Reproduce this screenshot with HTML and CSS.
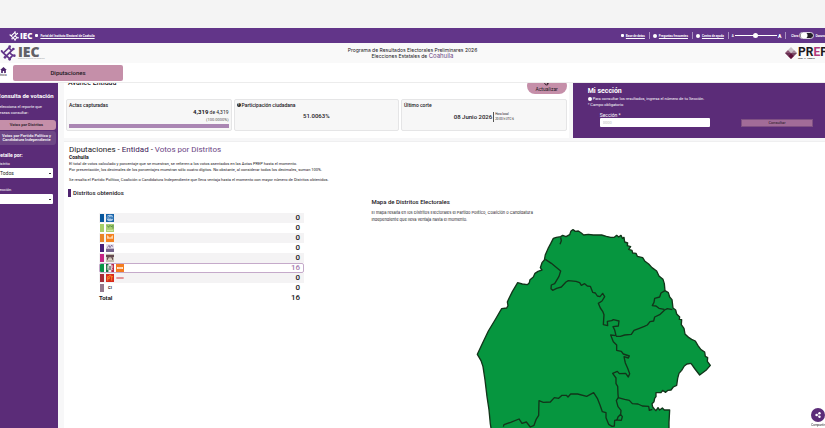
FILE: index.html
```html
<!DOCTYPE html>
<html lang="es">
<head>
<meta charset="utf-8">
<title>PREP Coahuila 2026</title>
<link rel="stylesheet" href="styles.css">
</head>
<body>
<svg class="defs" aria-hidden="true">
  <symbol id="mark" viewBox="0 0 48 48">
    <g fill="none" stroke="currentColor" stroke-width="5">
      <path d="M5 19 L16 30 M10 24 L27 8 M25 7 L36 18 M38 14 L17 35 M13 27 L29 41 M29 41 L40 29 M27 21 L37 31"/>
    </g>
    <g fill="currentColor">
      <circle cx="5" cy="18" r="3"/><circle cx="29" cy="5" r="4"/><circle cx="40" cy="12" r="4"/>
      <circle cx="15" cy="37" r="4"/><circle cx="29" cy="43" r="4"/><circle cx="43" cy="32" r="4"/>
    </g>
  </symbol>
</svg>

<div class="topbar">
  <a class="brand small" href="#"><svg class="mark"><use href="#mark"/></svg><span>IEC</span></a>
  <a class="toplink portal" href="#"><i class="dot square"></i><u>Portal del Instituto Electoral de Coahuila</u></a>
  <nav class="tools">
    <a class="toplink" href="#"><i class="dot square"></i><u>Base de datos</u></a>
    <a class="toplink" href="#"><i class="dot"></i><u>Preguntas frecuentes</u></a>
    <a class="toplink" href="#"><i class="dot"></i><u>Centro de ayuda</u></a>
    <label class="sizer"><span>A</span><input type="range" min="0" max="100" value="48" aria-label="Tamaño de texto"><b>A</b></label>
    <label class="theme"><span>Claro</span><input type="checkbox"><span>Oscuro</span></label>
  </nav>
</div>

<header class="header">
  <a class="brand" href="#"><svg class="mark"><use href="#mark"/></svg><span>IEC<small>Instituto Electoral de Coahuila</small></span></a>
  <h1>Programa de Resultados Electorales Preliminares 2026<span>Elecciones Estatales de <em>Coahuila</em></span></h1>
  <a class="prep" href="#">
    <svg viewBox="0 0 36 36"><path fill="#c9c3c8" d="M18 0 27 9 18 18 9 9z"/><path fill="#8a5573" d="M9 9 18 18 9 27 0 18z"/><path fill="#a88a9c" d="M27 9 36 18 27 27 18 18z"/><path fill="#751540" d="M18 18 27 27 18 36 9 27z"/><path fill="#4c1136" d="M0 18h36L18 36z" opacity=".55"/></svg>
    <span>PR<em>E</em>P<small>2026 · A · TIEMPO</small></span>
  </a>
</header>

<nav class="tabs">
  <a class="home" href="#"><svg viewBox="0 0 20 18"><path fill="#4c246b" d="M10 0 0 9h3v9h5v-6h4v6h5V9h3z"/></svg>Inicio</a>
  <button class="tab">Diputaciones</button>
</nav>

<div class="body">
  <aside class="side">
    <h2>Consulta de votación</h2>
    <p>Selecciona el reporte que deseas consultar:</p>
    <button class="report active">Votos por Distritos</button>
    <button class="report">Votos por Partido Político y Candidatura Independiente</button>
    <h3>Detalle por:</h3>
    <label for="distrito">Distrito</label>
    <select id="distrito"><option>Todos</option></select>
    <label for="seccion">Sección</label>
    <select id="seccion"><option></option></select>
  </aside>

  <main class="main">
    <div class="summary">
      <section class="advance">
        <div class="advance-head">
          <h2>Avance Entidad</h2>
          <button class="refresh"><svg viewBox="0 0 12 12"><path d="M10 3v3H7M10 6a4 4 0 1 1-1-3" fill="none" stroke="#21151d" stroke-width="2"/></svg>Actualizar</button>
        </div>
        <div class="cards">
          <div class="card">
            <h3>Actas capturadas</h3>
            <p class="count"><b>4,319</b> de 4,319</p>
            <p class="percent">(100.0000%)</p>
            <div class="bar"></div>
          </div>
          <div class="card">
            <h3><i class="help">?</i>Participación ciudadana</h3>
            <p class="figure">51.0063%</p>
          </div>
          <div class="card">
            <h3>Último corte</h3>
            <p class="figure date">08 Junio 2026<small>Hora local<br>20:00 h UTC-6</small></p>
          </div>
        </div>
      </section>
      <form class="section-form">
        <h2>Mi sección</h2>
        <p><i class="dot"></i>Para consultar los resultados, ingresa el número de tu Sección.</p>
        <p>* Campo obligatorio</p>
        <div class="fields">
          <div class="field"><label for="num">Sección *</label><input id="num" type="text" placeholder="0000"></div>
          <button type="button">Consultar</button>
        </div>
      </form>
    </div>

    <section class="results">
      <h2 class="crumbs">Diputaciones - <span>Entidad</span> - <em>Votos por Distritos</em></h2>
      <h3 class="state">Coahuila</h3>
      <p>El total de votos calculado y porcentaje que se muestran, se refieren a los votos asentados en las Actas PREP hasta el momento.</p>
      <p>Por presentación, los decimales de los porcentajes muestran sólo cuatro dígitos. No obstante, al considerar todos los decimales, suman 100%.</p>
      <p class="note">Se resalta el Partido Político, Coalición o Candidatura Independiente que lleva ventaja hasta el momento con mayor número de Distritos obtenidos.</p>
      <div class="columns">
        <div>
          <h3 class="won">Distritos obtenidos</h3>
          <table class="parties">
            <tbody>
              <tr><th scope="row"><span class="party"><i class="swatch blue"></i><svg viewBox="0 0 24 24"><path fill="#1763a9" d="M0 0h24v24H0z"/><circle cx="12" cy="12" r="10" fill="#a9c9e8"/><path d="M4 15V8h5q3 3 0 4H6M11 15l2-7 3 7M17 15V8l4 7V8" fill="none" stroke="#1763a9" stroke-width="2"/></svg></span></th><td>0</td></tr>
              <tr><th scope="row"><span class="party"><i class="swatch lime"></i><svg viewBox="0 0 24 24"><path fill="#a9cf72" d="M0 0h24v24H0z"/><path d="M3 4l5 6 3-6M14 4l2 5 5-5v10" fill="none" stroke="#38733a" stroke-width="2"/><path d="M3 19h18" stroke="#d5e8b5" stroke-width="3"/></svg></span></th><td>0</td></tr>
              <tr><th scope="row"><span class="party"><i class="swatch orange"></i><svg viewBox="0 0 24 24"><path fill="#f58220" d="M0 0h24v24H0z"/><path fill="#fbd3a8" d="M3 3l9 8 9-8v11H3z"/></svg></span></th><td>0</td></tr>
              <tr><th scope="row"><span class="party"><i class="swatch violet"></i><svg viewBox="0 0 24 24"><path fill="#e6e0ed" d="M0 0h24v24H0z"/><path d="M4 11l5-7 3 7 5-8 3 5" fill="none" stroke="#5a4376" stroke-width="2"/><path fill="#75638b" d="M0 14h24v10H0z"/></svg></span></th><td>0</td></tr>
              <tr><th scope="row"><span class="party"><i class="swatch magenta"></i><svg viewBox="0 0 24 24"><path fill="#c3bcae" d="M0 0h24v24H0z"/><path fill="#654a50" d="M0 3h24v6H0zM3 10h7v7H3zM14 10h7v7h-7z"/><path fill="#ded5c8" d="M6 13h12v5H6z"/></svg></span></th><td>0</td></tr>
              <tr class="leader"><th scope="row"><span class="party"><i class="swatch green"></i><svg viewBox="0 0 24 24"><path fill="#17713f" d="M0 0h8v24H0z"/><path fill="#eee" d="M8 0h8v24H8z"/><path fill="#bd2847" d="M16 0h8v24h-8z"/><path d="M4 18V5h4v6H5M12 18V7M16 18V5h4v6l-4 1 4 6" fill="none" stroke="#e9e4e4" stroke-width="2"/><path d="M12 6v12" stroke="#30343b" stroke-width="3"/></svg><svg viewBox="0 0 24 24"><path fill="#f47c20" d="M0 0h24v24H0z"/><path fill="#ffe8d0" d="M3 9h18v6H3z"/><path stroke="#e08a4c" d="M9 9v6M15 9v6"/></svg></span></th><td>16</td></tr>
              <tr><th scope="row"><span class="party"><i class="swatch red"></i><svg viewBox="0 0 24 24"><path fill="#d92a1c" d="M0 0h24v24H0z"/><path d="M5 20V8h5v6H6M13 8h8M17 8v12M9 4h7" fill="none" stroke="#ffb52e" stroke-width="2"/></svg><svg viewBox="0 0 24 24"><path fill="#d9666c" d="M1 10h22v4H1z"/></svg></span></th><td>0</td></tr>
              <tr><th scope="row"><span class="party"><i class="swatch mauve"></i><span class="ci">CI</span></span></th><td>0</td></tr>
            </tbody>
            <tfoot><tr><th scope="row">Total</th><td>16</td></tr></tfoot>
          </table>
        </div>
        <div class="map">
          <h3>Mapa de Distritos Electorales</h3>
          <p>El mapa resalta en los Distritos Electorales el Partido Político, Coalición o Candidatura Independiente que lleva ventaja hasta el momento.</p>
          <svg viewBox="0 24 750 616" role="img" aria-label="Mapa de Coahuila">
            <g stroke="#12351a" stroke-width="4" stroke-linejoin="round">
              <path fill="#06963f" d="M84 660 76 612 72 570 66 530 60 480 54 440 48 422 37 403 50 375 70 333 90 300 110 266 125 264 129 257 127 246 131 237 142 215 158 188 172 192 187 194 193 188 195 179 205 171 210 160 219 154 231 150 226 143 231 128 238 120 241 104 249 86 257 71 265 55 274 52 287 50 293 46 303 50 314 44 318 33 324 29 331 34 340 33 349 39 356 45 370 43 385 45 398 45 410 45 424 49 437 52 448 52 455 46 461 51 468 46 472 55 477 52 479 66 488 69 487 77 497 80 491 88 501 91 503 99 513 100 517 109 533 113 540 124 551 132 561 143 575 153 582 168 594 178 598 191 600 212 610 218 614 231 621 239 624 264 632 270 635 282 644 291 643 298 650 299 649 314 657 325 660 342 672 353 680 358 691 363 699 377 708 389 719 396 721 409 728 413 727 424 736 436 725 449 704 465 697 456 690 447 678 430 666 432 658 438 650 451 642 460 638 475 635 496 625 501 618 510 609 511 602 517 593 511 588 518 573 518 573 530 569 535 567 545 561 551 563 561 568 567 573 572 579 563 584 570 592 564 598 570 614 570 612 607 612 660z"/>
              <g fill="none">
                <path d="M241 118 259 130 287 153 282 169 269 191 259 195 258 206 263 211 275 205 289 201 303 186 310 182 333 184 344 188 349 196 359 191 367 198 376 199 383 217 391 219 397 228 405 230 413 220 419 230 411 243 400 250 406 264 413 274 417 284 415 314 428 317 427 304 440 302 445 299 462 303 460 318 444 320 449 330 453 347 437 345 445 365 455 375 455 391 469 394 475 402 493 408 490 414 477 410 481 429 488 445 494 461 490 471 482 460 463 461 457 454 443 460 453 474 453 491 458 499 459 523 460 532 454 542 459 560 468 571 467 583 472 590 469 601 456 600 459 591 467 583"/>
                <path d="M287 52 289 62 285 73M453 349 466 349 479 345 499 343 507 331 523 325 538 319 547 315 555 305 566 303 569 291 584 284 599 270 607 266 622 269M600 212 588 219 584 231 569 235 567 247 562 257 573 258 582 265 598 268M459 533 479 538 493 541 502 551 519 552 532 558 551 559 553 571 562 568M115 620 117 614 137 607 162 597 171 610 184 606 196 621 207 616 213 599 221 586 222 542 235 547 256 546 268 533 281 535 291 526 304 526 309 531 317 522 338 522 365 529 386 518 397 535 405 555 412 575 423 578 423 593 431 613 441 619 448 618 449 601 456 600"/>
              </g>
            </g>
          </svg>
        </div>
      </div>
    </section>
  </main>
</div>

<button class="share"><span><svg viewBox="0 0 20 20"><path d="M15 4 5 10l10 6" fill="none" stroke="#fff" stroke-width="2"/><g fill="#fff"><circle cx="15" cy="4" r="4"/><circle cx="5" cy="10" r="4"/><circle cx="15" cy="16" r="4"/></g></svg></span>Compartir</button>
</body>
</html>
```
FILE: styles.css
```css
* { box-sizing: border-box; }
body {
  margin: 0; padding-top: 28px; height: 100vh; overflow: hidden;
  display: flex; flex-direction: column;
  background: #f4f4f4; color: #1b171d;
  font: 4px/6px Roboto, sans-serif;
}
h1, h2, h3, p { margin: 0; font-size: inherit; }
a { color: inherit; text-decoration: none; }
button, input, select { font: inherit; color: inherit; border: 0; margin: 0; padding: 0; }
em, i { font-style: normal; }
svg { display: block; }
.defs { position: absolute; width: 0; height: 0; }

.topbar { flex: none; height: 15px; padding-left: 9px; display: flex; align-items: center; background: #623589; color: #fff; font-size: 3px; font-weight: 700; white-space: nowrap; }
.brand { display: flex; align-items: center; gap: 2px; font: 800 14px/10px "Open Sans", sans-serif; color: #626166; }
.brand .mark { width: 16px; height: 16px; color: #623589; }
.brand small { display: block; font: 2px/3px Roboto, sans-serif; color: #999; }
.brand.small { font-size: 8px; color: #fff; gap: 1px; }
.brand.small .mark { width: 10px; height: 10px; color: #fff; }
.toplink { display: flex; align-items: center; gap: 2px; }
.portal { margin-left: 3px; }
.dot { display: inline-block; flex: none; width: 4px; height: 4px; border-radius: 50%; background: #fff; }
.square { width: 3px; height: 3px; border-radius: 1px; }
.tools { margin-left: auto; display: flex; align-items: center; height: 7px; }
.tools > * { padding-right: 4px; margin-right: 3px; border-right: 1px solid #a98fc0; height: 7px; }
.tools > .sizer { margin-right: 5px; }
.tools > .theme { padding: 0; margin: 0; border: 0; }
.sizer, .theme { display: flex; align-items: center; gap: 1px; }
.sizer b { font-size: 5px; }
.sizer input { appearance: none; width: 42px; height: 5px; background: linear-gradient(#fff, #fff) center / 100% 1px no-repeat; }
.sizer input::-webkit-slider-thumb { appearance: none; width: 5px; height: 5px; border-radius: 50%; background: #fff; }
.theme input { appearance: none; width: 15px; height: 7px; border-radius: 4px; background: radial-gradient(circle at 4px 50%, #fff 3px, transparent 4px), #252129; border: 1px solid #ded6e5; }

.header { flex: none; height: 20px; display: grid; grid-template-columns: 1fr auto 1fr; align-items: center; background: #f9f9f9; }
.header h1 { font: 400 5px/6px Inter, sans-serif; text-align: center; }
.header h1 span { display: block; }
.header h1 em { font-size: 6px; color: #6b4584; }
.prep { justify-self: end; margin-right: -3px; display: flex; align-items: center; gap: 1px; font-size: 12px; line-height: 10px; font-weight: 700; }
.prep svg { width: 12px; height: 12px; }
.prep em { color: #b03a7b; }
.prep small { display: block; font-size: 2px; line-height: 3px; }

.tabs { flex: none; height: 20px; display: flex; align-items: center; gap: 5px; margin-left: -3px; padding-left: 1px; background: #fff; border-bottom: 1px solid #ececec; }
.home { width: 10px; display: flex; flex-direction: column; align-items: center; font-size: 3px; line-height: 5px; }
.home svg { width: 7px; height: 6px; }
.tab { width: 110px; height: 16px; border-radius: 2px; background: #c58fa9; font-size: 6px; font-weight: 500; }

.body { flex: 1; min-height: 0; display: flex; background: #f7f7f8; }
.side { flex: none; width: 62px; margin-left: -4px; padding: 9px 2px 0 1px; background: #5b2c78; color: #fff; display: flex; flex-direction: column; }
.side h2 { font-size: 6px; line-height: 8px; white-space: nowrap; }
.side p { margin: 4px 8px 4px 0; }
.report { height: 14px; line-height: 4px; border-radius: 3px; background: #6d4685; font-weight: 500; }
.report.active { height: 10px; margin-bottom: 1px; background: #c58fa9; color: #21151d; }
.side h3 { margin: 7px 0 3px; font-size: 5px; }
.side select { appearance: none; height: 10px; margin: 1px 3px 9px 0; padding-left: 3px; border-radius: 1px; background: linear-gradient(#333, #333) right 2px center / 2px 1px no-repeat #fff; color: #222; font-size: 5px; }

.main { flex: 1; min-width: 0; padding-left: 6px; display: flex; flex-direction: column; }
.summary { flex: none; display: grid; grid-template-columns: 2fr 1fr; gap: 4px; margin-bottom: 3px; }
.advance { height: 55px; padding: 0 2px; background: #fff; overflow: hidden; }
.advance-head { height: 16px; display: flex; justify-content: space-between; align-items: flex-start; padding-left: 2px; }
.advance-head h2 { margin-top: -4px; font-size: 7px; line-height: 8px; font-weight: 500; }
.refresh { width: 40px; height: 16px; margin-top: -5px; padding-bottom: 1px; border-radius: 8px; background: #c58fa9; display: flex; flex-direction: column; align-items: center; justify-content: flex-end; font-size: 5px; line-height: 7px; }
.refresh svg { width: 5px; height: 5px; }
.cards { display: grid; grid-template-columns: repeat(3, 1fr); gap: 2px; }
.card { height: 32px; padding: 2px; border: 1px solid #e5e5e6; border-radius: 2px; background: #f7f7f7; }
.card h3 { font-size: 5px; line-height: 6px; font-weight: 500; }
.card .count, .card .percent { text-align: right; line-height: 8px; }
.card .count { font-size: 5px; }
.count b { font-size: 6px; }
.percent { color: #555; }
.bar { height: 4px; background: #aa86b3; }
.figure { margin-top: 4px; font-size: 6px; line-height: 8px; font-weight: 500; text-align: center; }
.date { display: flex; align-items: center; justify-content: center; gap: 1px; }
.date small { padding-left: 1px; border-left: 1px solid #555; font-size: 3px; line-height: 5px; font-weight: 400; text-align: left; }
.help { display: inline-block; width: 4px; height: 4px; margin: 1px 1px 0 0; border-radius: 50%; background: #222; color: #fff; font-size: 3px; line-height: 4px; text-align: center; vertical-align: top; }
.section-form { padding: 4px 12px 0 15px; background: #5b2c78; color: #fff; }
.section-form h2 { font-size: 7px; line-height: 8px; }
.section-form h2 + p { margin-top: 1px; }
.section-form .dot { margin-right: 1px; vertical-align: middle; }
.fields { display: flex; justify-content: space-between; align-items: flex-end; padding-left: 12px; margin-top: 4px; }
.field { width: 110px; display: flex; flex-direction: column; }
.field input { width: 100%; height: 9px; padding-left: 3px; background: #fff; color: #222; border-radius: 1px; }
.field label { font-size: 5px; }
.field input::placeholder { color: #bbb; }
.fields button { width: 72px; height: 8px; background: #a26c98; color: #21151d; border: 1px solid #7f5083; }

.results { flex: 1; min-height: 0; padding: 3px 0 0 5px; background: #fff; border-top: 1px solid #efeff0; }
.crumbs { font-size: 8px; line-height: 9px; font-weight: 400; }
.crumbs span { color: #402058; }
.crumbs em { color: #6b4584; }
.state { margin-bottom: 1px; font-size: 5px; }
.note { margin-top: 4px; }
.columns { display: grid; grid-template-columns: 2fr 3fr; margin-top: 6px; }
.won { margin-left: -1px; padding-left: 2px; border-left: 3px solid #4f2470; font-size: 6px; line-height: 8px; font-weight: 500; }
.parties { width: 205px; margin: 16px 0 0 30px; border-collapse: collapse; line-height: 8px; }
.parties tr { height: 10px; }
.parties th, .parties td { padding: 0; }
.parties tbody tr:nth-child(odd) { background: #f4f3f4; }
.parties th { text-align: left; font-size: 6px; }
.parties td { padding-right: 4px; text-align: right; font-size: 8px; font-weight: 500; }
.parties .leader { outline: 1px solid #c5aaca; outline-offset: -1px; border-radius: 2px; }
.parties .leader td { color: #a47bad; }
.party { display: flex; align-items: center; gap: 2px; padding-left: 1px; }
.party svg { width: 8px; height: 8px; }
.swatch { width: 4px; height: 8px; }
.ci { width: 8px; font-size: 4px; text-align: center; }
.blue { background: #06569c; } .lime { background: #a6cf67; } .orange { background: #e98528; } .violet { background: #48207a; }
.magenta { background: #c52584; } .green { background: #069447; } .red { background: #a32b36; } .mauve { background: #94798d; }
.map { padding: 9px 16px 0 0; }
.map h3 { font-size: 6px; line-height: 8px; font-weight: 500; }
.map p { max-width: 175px; margin-top: 3px; font: 4px/7px Inter, sans-serif; }
.map svg { width: 250px; margin: 5px auto 0; }

.share { position: fixed; right: -5px; bottom: 0; padding: 0; width: 24px; background: none; display: flex; flex-direction: column; align-items: center; font-size: 3px; line-height: 6px; }
.share span { width: 14px; height: 14px; border-radius: 50%; background: #5b2c78; display: grid; place-items: center; }
.share svg { width: 6px; height: 6px; }
```
